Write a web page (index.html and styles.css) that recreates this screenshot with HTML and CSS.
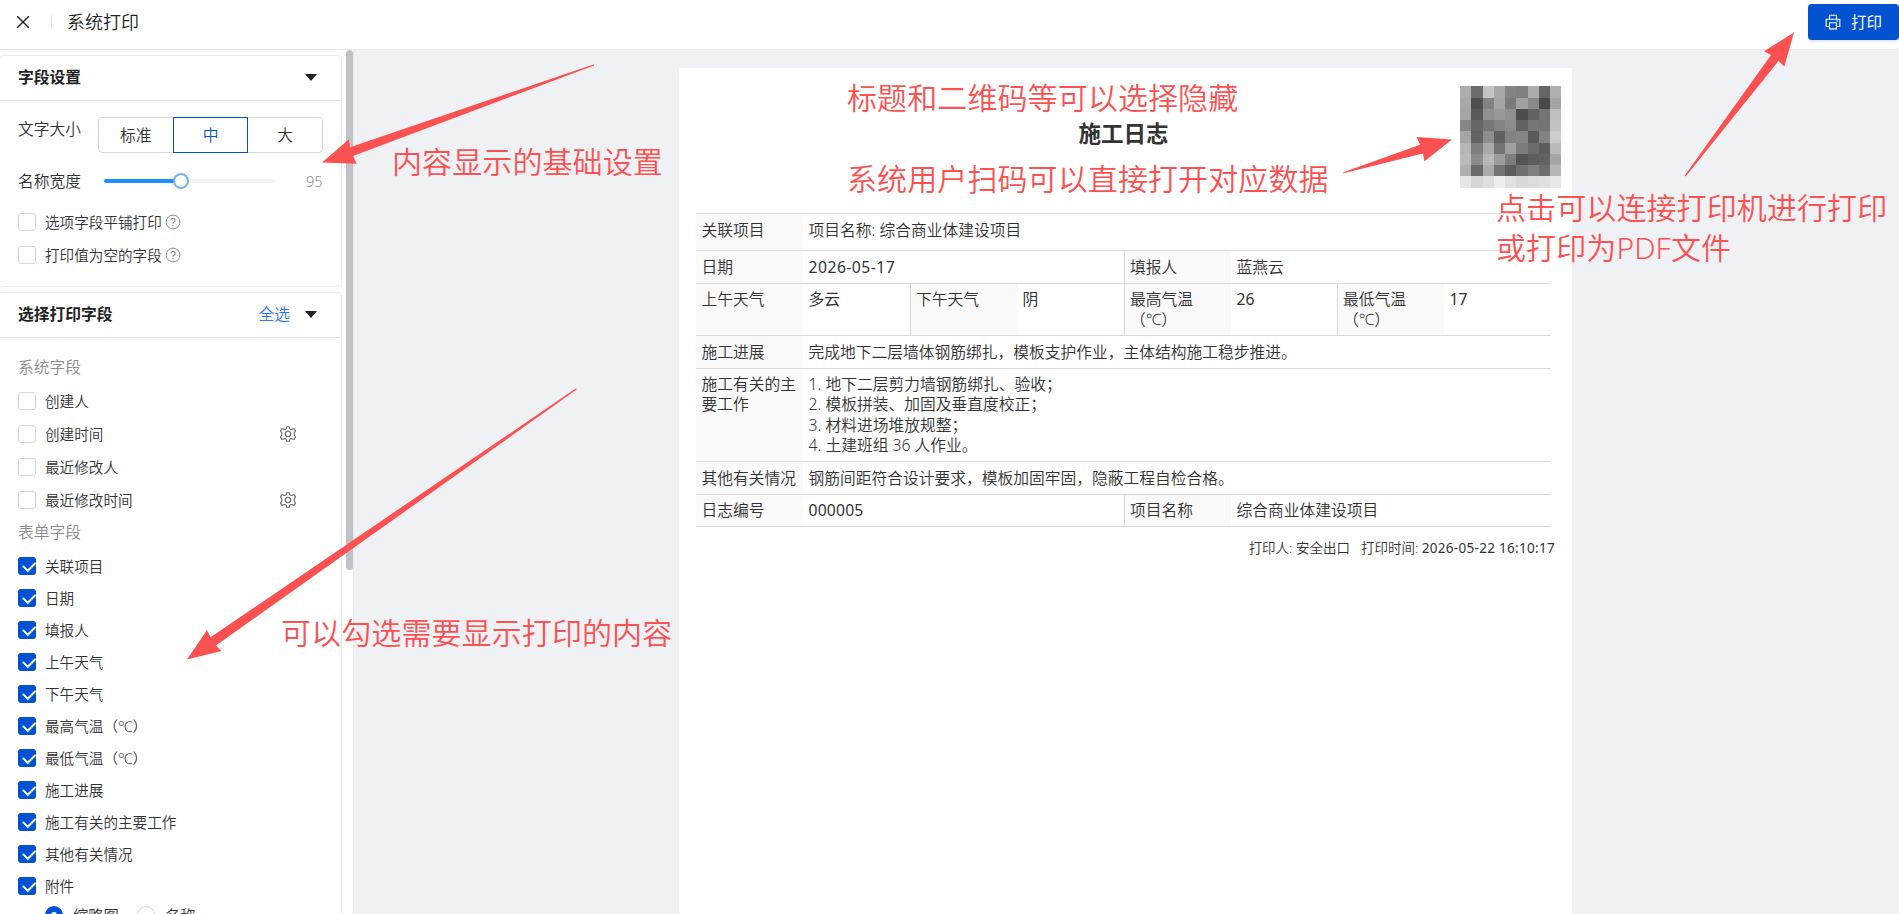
FILE: index.html
```html
<!DOCTYPE html>
<html lang="zh-CN">
<head>
<meta charset="utf-8">
<title>系统打印</title>
<link rel="stylesheet" href="styles.css">
</head>
<body>
<svg class="defs" width="0" height="0">
  <symbol id="help" viewBox="0 0 16 16"><circle cx="8" cy="8" r="6.9" fill="none" stroke="#8c8c8c" stroke-width="1"/><path d="M5.9 6.5a2.1 2 0 1 1 3.1 1.7c-.7.4-1 .7-1 1.5" fill="none" stroke="#8c8c8c" stroke-width="1.1"/><circle cx="8" cy="11.5" r=".75" fill="#8c8c8c"/></symbol>
  <symbol id="gear" viewBox="0 0 16 16"><path d="M6.300 2.600 6.800.7h2.400l.5 1.900 1.500.9 1.900-.6h1.400l1 2.200-1.200 1.600v2.600l1.200 1.600-1 2.200h-1.400l-1.900-.6-1.500.9-.5 1.900H6.800l-.5-1.900-1.500-.9-1.900.6H1.500l-1-2.200 1.200-1.600V6.700L.5 5.100l1-2.200h1.400l1.900.6z" fill="none" stroke="#666" stroke-width="1.1" stroke-linejoin="round"/><circle cx="8" cy="8" r="2.700" fill="none" stroke="#666" stroke-width="1.100"/></symbol>
</svg>

<header class="topbar">
  <svg class="close" viewBox="0 0 14 14"><path d="M1.200 1.200 12.800 12.800M12.800 1.200 1.200 12.800" stroke="#222" stroke-width="1.400"/></svg>
  <i class="sep"></i>
  <span class="page-title">系统打印</span>
  <button class="print">
    <svg viewBox="0 0 16 16"><g fill="none" stroke="#fff" stroke-width="1.100"><path d="M4.500 5V1.200h7V5M4.500 12.500H1.200V5.200h13.600v7.300h-3.300"/><path d="M4.500 8.700h7v6.200h-7z"/></g><path d="M11.500 6.400h1.600v1h-1.600z" fill="#fff"/></svg>
    <span>打印</span>
  </button>
</header>

<main class="body">
  <aside class="sidebar">
    <section class="panel settings">
      <div class="panel-head"><b>字段设置</b><i class="caret"></i></div>
      <div class="size-row">
        <span class="lbl">文字大小</span>
        <div class="seg"><span>标准</span><span class="on">中</span><span>大</span></div>
      </div>
      <div class="width-row">
        <span class="lbl">名称宽度</span>
        <div class="slider"><i class="fill"></i><i class="knob"></i></div>
        <span class="num">95</span>
      </div>
      <label class="check"><i class="box"></i><span>选项字段平铺打印</span><svg class="q"><use href="#help"/></svg></label>
      <label class="check"><i class="box"></i><span>打印值为空的字段</span><svg class="q"><use href="#help"/></svg></label>
    </section>

    <section class="panel fields">
      <div class="panel-head"><b>选择打印字段</b><a class="all">全选</a><i class="caret"></i></div>
      <div class="group first">系统字段</div>
      <label class="check"><i class="box"></i><span>创建人</span></label>
      <label class="check"><i class="box"></i><span>创建时间</span><svg class="gear"><use href="#gear"/></svg></label>
      <label class="check"><i class="box"></i><span>最近修改人</span></label>
      <label class="check"><i class="box"></i><span>最近修改时间</span><svg class="gear"><use href="#gear"/></svg></label>
      <div class="group">表单字段</div>
      <div class="form-list">
        <label class="check"><i class="box ok"></i><span>关联项目</span></label>
        <label class="check"><i class="box ok"></i><span>日期</span></label>
        <label class="check"><i class="box ok"></i><span>填报人</span></label>
        <label class="check"><i class="box ok"></i><span>上午天气</span></label>
        <label class="check"><i class="box ok"></i><span>下午天气</span></label>
        <label class="check"><i class="box ok"></i><span>最高气温（℃）</span></label>
        <label class="check"><i class="box ok"></i><span>最低气温（℃）</span></label>
        <label class="check"><i class="box ok"></i><span>施工进展</span></label>
        <label class="check"><i class="box ok"></i><span>施工有关的主要工作</span></label>
        <label class="check"><i class="box ok"></i><span>其他有关情况</span></label>
        <label class="check"><i class="box ok"></i><span>附件</span></label>
      </div>
      <div class="radios"><i class="radio sel"></i><span>缩略图</span><i class="radio"></i><span>名称</span></div>
    </section>
    <i class="thumb"></i>
  </aside>

  <div class="canvas">
    <article class="paper">
      <div class="paper-head">
        <h1>施工日志</h1>
        <div class="qr" id="qr"></div>
      </div>
      <div class="grid">
        <div class="row r1"><div class="k">关联项目</div><div class="v">项目名称: 综合商业体建设项目</div></div>
        <div class="row half r2"><div class="k">日期</div><div class="v date">2026-05-17</div><div class="k">填报人</div><div class="v">蓝燕云</div></div>
        <div class="row quarter r3"><div class="k">上午天气</div><div class="v">多云</div><div class="k">下午天气</div><div class="v">阴</div><div class="k">最高气温（℃）</div><div class="v">26</div><div class="k">最低气温（℃）</div><div class="v">17</div></div>
        <div class="row r4"><div class="k">施工进展</div><div class="v">完成地下二层墙体钢筋绑扎，模板支护作业，主体结构施工稳步推进。</div></div>
        <div class="row r5"><div class="k">施工有关的主要工作</div><div class="v">1. 地下二层剪力墙钢筋绑扎、验收；<br>2. 模板拼装、加固及垂直度校正；<br>3. 材料进场堆放规整；<br>4. 土建班组 36 人作业。</div></div>
        <div class="row r6"><div class="k">其他有关情况</div><div class="v">钢筋间距符合设计要求，模板加固牢固，隐蔽工程自检合格。</div></div>
        <div class="row half r7"><div class="k">日志编号</div><div class="v num6">000005</div><div class="k">项目名称</div><div class="v">综合商业体建设项目</div></div>
      </div>
      <footer><span>打印人: 安全出口</span><span>打印时间: <em>2026-05-22 16:10:17</em></span></footer>
    </article>
  </div>
</main>

<svg class="arrows" viewBox="0 0 1899 914" fill="#fc5151">
  <path d="M594 64.200 350 147.300 349 139.300 322 162.500 356.700 163.700 353 156 594 65.500z"/>
  <path d="M576 388.300 210.500 637.300 207 630 187 659.500 221.700 651 216 645.500 576.700 389.600z"/>
  <path d="M1343.300 172.300 1420 144.700 1416.700 137 1452 139.500 1424.300 161.500 1423 153.500 1343.600 173.200z"/>
  <path d="M1684.700 175.500 1771 55 1764 51.300 1794 32.500 1784.300 66.500 1778.500 61 1685.700 176.500z"/>
</svg>
<p class="note n1">内容显示的基础设置</p>
<p class="note n2">可以勾选需要显示打印的内容</p>
<p class="note n3">标题和二维码等可以选择隐藏</p>
<p class="note n4">系统用户扫码可以直接打开对应数据</p>
<p class="note n5">点击可以连接打印机进行打印<br>或打印为PDF文件</p>
<script src="qr.js"></script>
</body>
</html>
```
FILE: styles.css
```css
* { box-sizing: border-box; }
body { margin: 0; width: 1899px; height: 914px; overflow: hidden; background: #fff; color: #333; font-family: "Noto Sans", "Noto Sans CJK SC", sans-serif; font-size: 15.75px; text-spacing-trim: space-all; position: relative; }
i, em { font-style: normal; }
.defs { position: absolute; }

.topbar { display: flex; align-items: center; height: 50px; padding: 0 0 6px 16px; border-bottom: 1px solid #e8e9ec; }
.close { width: 14px; height: 14px; }
.sep { width: 1px; height: 14px; margin: 0 15px 0 21px; background: #e3e3e3; }
.page-title { font-size: 18px; font-weight: 350; color: #222; line-height: 28px; }
.print { display: flex; align-items: center; gap: 10px; width: 91px; height: 36px; margin-left: auto; padding: 0 0 0 17px; border: 0; border-radius: 4px; background: #0052d0; color: #fff; font: inherit; font-size: 15.500px; line-height: 36px; box-shadow: 0 2px 2px rgba(0, 82, 208, .12); }
.print svg { width: 16px; height: 16px; }

.body { display: flex; height: 864px; }
.sidebar { position: relative; width: 354px; height: 864px; padding-top: 5px; border-right: 1px solid #e6e7ea; background: #fff; overflow: hidden; font-weight: 350; }
.panel { width: 343px; margin-left: -1px; padding-left: 18px; border: 1px solid #ececee; border-radius: 4px; }
.settings { height: 232px; margin-bottom: 5px; }
.fields { height: 700px; }
.panel-head { display: flex; align-items: center; height: 45px; margin-left: -18px; padding: 0 24px 0 18px; border-bottom: 1px solid #e5e5e7; color: #222; }
.panel-head b { flex: 1; margin-top: -2px; line-height: 24px; font-weight: 700; }
.caret { margin-top: -2px; border: 6px solid transparent; border-top: 7px solid #222; border-bottom: 0; }
.all { margin: -3px 15px 0 0; color: #2d74f7; }
.lbl { width: 80px; line-height: 24px; }
.size-row { display: flex; padding-top: 16px; height: 61px; }
.seg { display: flex; width: 225px; height: 36px; border: 1px solid #d6d6d6; border-radius: 4px; }
.seg span { flex: 1; text-align: center; line-height: 34px; }
.seg .on { margin: -1px 0; border: 1px solid #0052d0; color: #0052d0; }
.width-row { display: flex; align-items: center; height: 38px; margin-bottom: 5px; }
.slider { position: relative; width: 171px; height: 4px; margin-left: 6px; border-radius: 2px; background: #f4f4f4; }
.slider .fill { display: block; width: 77px; height: 4px; border-radius: 2px; background: #1e8fff; }
.slider .knob { position: absolute; left: 69px; top: -6px; width: 16px; height: 16px; border: 2px solid #72b5f5; border-radius: 50%; background: #fff; }
.num { margin-left: 31px; font-size: 14.500px; color: #8c8c8c; }
.size-row .lbl { line-height: 24px; }
.check { display: flex; align-items: center; height: 33px; font-size: 14.600px; }
.check span { margin-left: 9px; line-height: 24px; white-space: nowrap; }
.box { display: block; width: 18px; height: 18px; border: 1px solid #d6d6d8; border-radius: 3px; }
.ok { position: relative; border: 0; background: #0052d0; }
.ok::after { content: ""; position: absolute; left: 4.5px; top: 4.500px; width: 9.500px; height: 5.5px; border: solid #fff; border-width: 0 0 2px 2px; transform: translateY(-.6px) rotate(-45deg); }
.q { width: 16px; height: 16px; margin-left: 3px; }
.gear { width: 16px; height: 16px; margin: 0 45px 0 auto; }
.group { height: 32px; color: #8c8c8c; line-height: 32px; }
.group.first { height: 46px; padding-top: 14px; line-height: 31px; }
.form-list { padding-top: 2px; }
.form-list .check { height: 32px; }
.radios { display: flex; align-items: center; padding: 1px 0 0 27px; height: 24px; font-size: 15.300px; }
.radio { width: 18px; height: 18px; border: 1px solid #d6d6d8; border-radius: 50%; }
.radio.sel { border: 6px solid #0052d0; }
.radios span { margin: 0 18px 0 10px; line-height: 22px; }
.thumb { position: absolute; left: 346px; top: 0; width: 7px; height: 520px; border-radius: 4px; background: #c1c2c8; }

.canvas { flex: 1; padding: 18px 0 0 325px; background: #f0f1f5; }
.paper { width: 893px; height: 846px; padding: 18px 11px 0 17px; background: #fff; font-weight: 350; }
.paper-head { display: flex; height: 127px; }
.paper-head h1 { flex: 1; margin: 33px 0 0 91px; text-align: center; font-size: 22.500px; line-height: 30px; font-weight: 700; }
.qr { display: grid; grid-template-columns: 11px 12px 11px 11px 11px 12px 11px 11px 11px; grid-template-rows: 12px 11px 11px 11px 12px 11px 11px 11px 12px; width: 101px; height: 102px; }
.grid { width: 855px; border-top: 1px solid #d9d9d9; }
.row { display: grid; grid-template-columns: 107px 1fr; border-bottom: 1px solid #d9d9d9; line-height: 20.400px; }
.half { grid-template-columns: 107px 321px 107px 1fr; }
.quarter { grid-template-columns: 107px 107px 107px 107px 107px 106px 107px 1fr; }
.k { padding: 5px 5px 0 5.5px; background: #f9f9f9; }
.v { padding: 5px 5px 0 5.5px; }
.v + .k { border-left: 1px solid #d9d9d9; padding-left: 5px; }
.r1 { height: 37px; } .r1 > div { padding-top: 6px; }
.r2, .r4, .r6 { height: 33px; }
.r2 > div, .r4 > div, .r6 > div { padding-top: 6px; }
.r3 { height: 52px; }
.r5 { height: 93px; }
.r7 { height: 32px; }
.date, .r3 .v, .num6, footer em { font-weight: 400; }
.date { letter-spacing: .45px; }
.num6 { letter-spacing: .15px; }
footer { display: flex; justify-content: flex-end; gap: 11px; margin-right: 6px; padding-top: 11px; font-size: 13.500px; line-height: 20px; }
footer em { letter-spacing: .3px; }

.arrows { position: absolute; left: 0; top: 0; width: 1899px; height: 914px; }
.note { position: absolute; margin: 0; color: #fc5151; font-size: 30px; font-weight: 350; line-height: 40px; letter-spacing: .1px; white-space: nowrap; }
.n1 { left: 392px; top: 142px; }
.n2 { left: 281px; top: 613px; }
.n3 { left: 847px; top: 78px; }
.n4 { left: 847px; top: 159px; }
.n5 { left: 1496px; top: 188px; }
```
FILE: qr.js
```js
const rows = [
  "ae6cc4a88480ac66b0", "a85082a67aa08a48a4", "a65a9098904c6274be",
  "866676848c627674c2", "a6628e6082865a82ce", "b67eaa74a07c6c5cba",
  "ba8cb89c7e545e62a6", "b06aaa745c70806eb6", "e6d6deeee2d8dce0e8"
];
const qr = document.getElementById("qr");
for (const v of rows.join("").match(/../g)) {
  const cell = document.createElement("i");
  cell.style.background = "#" + v + v + v;
  qr.append(cell);
}
```
